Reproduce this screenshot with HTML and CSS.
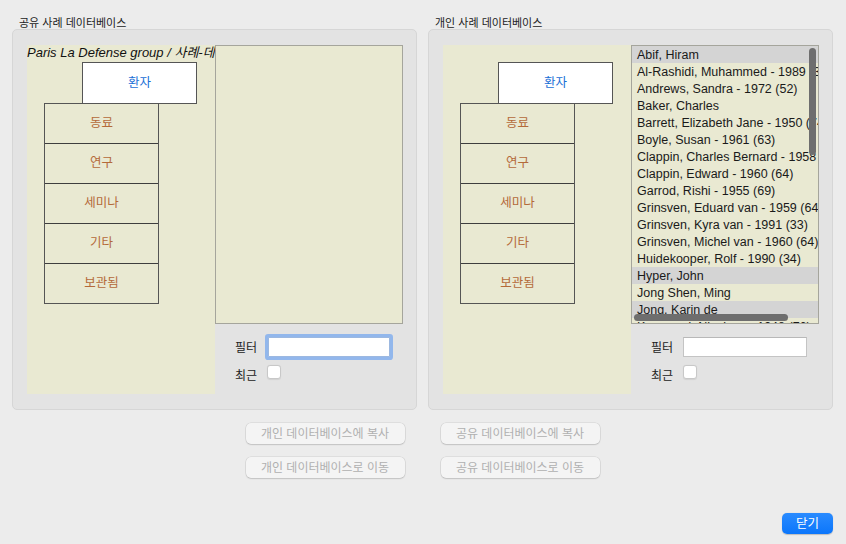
FILE: index.html
```html
<!DOCTYPE html>
<html lang="ko">
<head>
<meta charset="utf-8">
<title>사례 데이터베이스</title>
<link rel="stylesheet" href="styles.css">
</head>
<body>
<div class="window">
  <div class="panels">
    <section class="group">
      <div class="group-label">공유 사례 데이터베이스</div>
      <div class="group-box">
        <div class="canvas">
          <div class="canvas-title">Paris La Defense group / 사례-데이터베이스</div>
          <div class="patient">환자</div>
          <div class="stack">
            <div class="stack-item">동료</div>
            <div class="stack-item">연구</div>
            <div class="stack-item">세미나</div>
            <div class="stack-item">기타</div>
            <div class="stack-item">보관됨</div>
          </div>
        </div>
        <div class="side">
          <div class="list"></div>
          <div class="form">
            <div class="form-row">
              <span class="form-label">필터</span>
              <input class="text-input focused" type="text">
            </div>
            <div class="form-row check-row">
              <span class="form-label">최근</span>
              <span class="checkbox"></span>
            </div>
          </div>
        </div>
      </div>
    </section>
    <section class="group">
      <div class="group-label">개인 사례 데이터베이스</div>
      <div class="group-box">
        <div class="canvas">
          <div class="canvas-title"></div>
          <div class="patient">환자</div>
          <div class="stack">
            <div class="stack-item">동료</div>
            <div class="stack-item">연구</div>
            <div class="stack-item">세미나</div>
            <div class="stack-item">기타</div>
            <div class="stack-item">보관됨</div>
          </div>
        </div>
        <div class="side">
          <div class="list">
            <div class="row sel">Abif, Hiram</div>
            <div class="row">Al-Rashidi, Muhammed - 1989 (35)</div>
            <div class="row">Andrews, Sandra - 1972 (52)</div>
            <div class="row">Baker, Charles</div>
            <div class="row">Barrett, Elizabeth Jane - 1950 (74)</div>
            <div class="row">Boyle, Susan - 1961 (63)</div>
            <div class="row">Clappin, Charles Bernard - 1958 (66)</div>
            <div class="row">Clappin, Edward - 1960 (64)</div>
            <div class="row">Garrod, Rishi - 1955 (69)</div>
            <div class="row">Grinsven, Eduard van - 1959 (64)</div>
            <div class="row">Grinsven, Kyra van - 1991 (33)</div>
            <div class="row">Grinsven, Michel van - 1960 (64)</div>
            <div class="row">Huidekooper, Rolf - 1990 (34)</div>
            <div class="row sel">Hyper, John</div>
            <div class="row">Jong Shen, Ming</div>
            <div class="row sel">Jong, Karin de</div>
            <div class="row">Koenraad, Nicolaas - 1948 (76)</div>
            <div class="vscroll"></div>
            <div class="hscroll"></div>
          </div>
          <div class="form">
            <div class="form-row">
              <span class="form-label">필터</span>
              <input class="text-input" type="text">
            </div>
            <div class="form-row check-row">
              <span class="form-label">최근</span>
              <span class="checkbox"></span>
            </div>
          </div>
        </div>
      </div>
    </section>
  </div>
  <div class="actions">
    <button class="btn" disabled>개인 데이터베이스에 복사</button>
    <button class="btn" disabled>공유 데이터베이스에 복사</button>
    <button class="btn" disabled>개인 데이터베이스로 이동</button>
    <button class="btn" disabled>공유 데이터베이스로 이동</button>
  </div>
  <div class="footer">
    <button class="btn-primary">닫기</button>
  </div>
</div>
</body>
</html>
```
FILE: styles.css
```css
* { box-sizing: border-box; }

html, body {
  margin: 0;
  padding: 0;
  background: #ececec;
}

body {
  font-family: "Liberation Sans", "Noto Sans CJK KR", sans-serif;
  color: #222;
}

.window {
  width: 846px;
  height: 544px;
  padding: 15px 13px 0 12px;
  display: flex;
  flex-direction: column;
}

.panels {
  display: flex;
  gap: 11px;
}

.group {
  width: 405px;
  display: flex;
  flex-direction: column;
}

.group-label {
  font-family: "Noto Sans CJK KR", sans-serif;
  font-size: 11px;
  line-height: 14px;
  height: 14px;
  padding-left: 7px;
  color: #222;
}

.group-box {
  height: 381px;
  background: #e3e3e3;
  border: 1px solid #d6d6d6;
  border-radius: 5px;
  padding: 15px 13px 15px 14px;
  display: flex;
}

.canvas {
  width: 188px;
  height: 349px;
  background: #e9e9d2;
  overflow: hidden;
}

.canvas-title {
  height: 17px;
  font-family: "Liberation Sans", "Noto Sans CJK KR", sans-serif;
  font-style: italic;
  font-size: 13px;
  line-height: 15px;
  white-space: nowrap;
  overflow: hidden;
  color: #111;
}

.patient {
  margin-left: 55px;
  width: 115px;
  height: 42px;
  padding-bottom: 4px;
  background: #fff;
  border: 1px solid #555;
  display: flex;
  align-items: center;
  justify-content: center;
  font-family: "Noto Sans CJK KR", sans-serif;
  font-size: 12.5px;
  color: #1a6fd6;
}

.stack {
  margin-left: 17px;
  margin-top: -1px;
  width: 115px;
  border: 1px solid #555;
  display: flex;
  flex-direction: column;
}

.stack-item {
  height: 39px;
  padding-bottom: 4px;
  display: flex;
  align-items: center;
  justify-content: center;
  font-family: "Noto Sans CJK KR", sans-serif;
  font-size: 12.5px;
  color: #b46a3a;
}

.stack-item + .stack-item {
  height: 40px;
  border-top: 1px solid #3e3e3e;
}

.side {
  width: 188px;
  display: flex;
  flex-direction: column;
}

.list {
  position: relative;
  height: 279px;
  background: #e9e9d2;
  border: 1px solid #a5a59c;
  overflow: hidden;
}

.row {
  height: 17px;
  line-height: 19px;
  padding-left: 5px;
  font-size: 12.5px;
  color: #1a1a1a;
  white-space: nowrap;
  overflow: hidden;
}

.row.sel {
  background: #d4d4d4;
}

.vscroll {
  position: absolute;
  left: 177px;
  top: 2px;
  width: 7px;
  height: 107px;
  border-radius: 4px;
  background: #6e6e6e;
}

.hscroll {
  position: absolute;
  left: 2px;
  top: 268px;
  width: 154px;
  height: 7px;
  border-radius: 4px;
  background: #6e6e6e;
}

.form {
  padding-left: 20px;
  padding-top: 13px;
  display: flex;
  flex-direction: column;
  gap: 8px;
}

.form-row {
  display: flex;
  align-items: center;
  height: 20px;
}

.check-row {
  height: 14px;
}

.form-label {
  width: 32px;
  padding-bottom: 2px;
  font-family: "Noto Sans CJK KR", sans-serif;
  font-size: 12px;
  color: #222;
}

.check-row .form-label {
  padding-top: 4px;
  padding-bottom: 0;
}

.text-input {
  width: 124px;
  height: 20px;
  margin: 0;
  padding: 0 4px;
  background: #fff;
  border: 1px solid #c4c4c4;
  border-top-color: #b8b8b8;
  border-radius: 0;
  outline: none;
}

.text-input.focused {
  width: 122px;
  margin-left: 1px;
  border-color: #9cb8e0;
  box-shadow: 0 0 0 3px #92b7ec;
  border-radius: 1px;
}

.checkbox {
  width: 14px;
  height: 14px;
  background: #fff;
  border: 1px solid #c8c8c8;
  border-radius: 3px;
  box-shadow: 0 0.5px 1px rgba(0, 0, 0, 0.08);
}

.actions {
  margin-top: 13px;
  display: grid;
  grid-template-columns: 159px 159px;
  column-gap: 36px;
  row-gap: 13px;
  justify-content: center;
}

.btn {
  height: 21px;
  margin: 0;
  padding: 0 0 2px;
  background: #f4f4f4;
  border: none;
  border-radius: 5px;
  box-shadow: 0 0 0 0.5px rgba(0, 0, 0, 0.12), 0 1px 1.5px rgba(0, 0, 0, 0.12);
  font-family: "Noto Sans CJK KR", sans-serif;
  font-size: 12px;
  color: #b0b0b0;
}

.footer {
  margin-top: 35px;
  display: flex;
  justify-content: flex-end;
}

.btn-primary {
  width: 51px;
  height: 21px;
  margin: 0;
  padding: 0 0 2px;
  border: none;
  border-radius: 5px;
  background: linear-gradient(#2a8bff, #0b76fb);
  box-shadow: 0 0.5px 1px rgba(0, 0, 0, 0.2);
  font-family: "Noto Sans CJK KR", sans-serif;
  font-size: 12.5px;
  color: #fff;
}
```
